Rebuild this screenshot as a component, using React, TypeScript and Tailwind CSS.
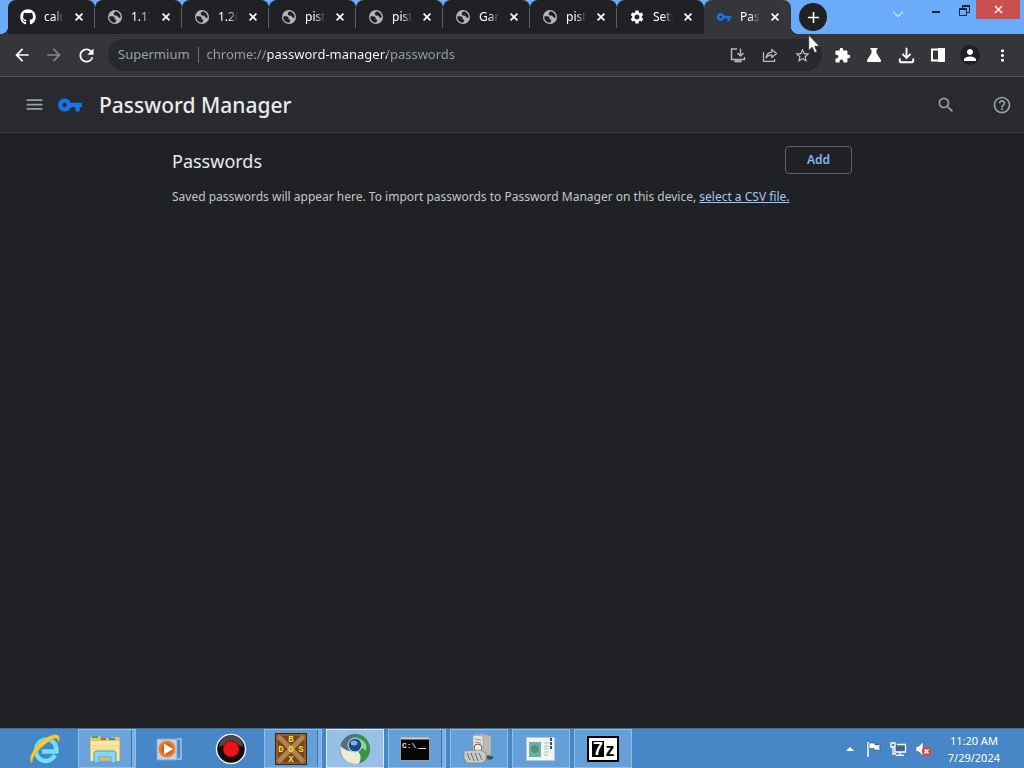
import type { ReactNode } from "react";
import { FaGithub } from "react-icons/fa";
import {
  MdAdd,
  MdArrowBack,
  MdArrowForward,
  MdExtension,
  MdHelpOutline,
  MdMenu,
  MdMoreVert,
  MdOutlineFileDownload,
  MdPerson,
  MdRefresh,
  MdSearch,
  MdSettings,
  MdStarOutline,
  MdVpnKey,
} from "react-icons/md";

function GlobeIcon() {
  return (
    <svg width="16" height="16" viewBox="0 0 16 16">
      <circle cx="8" cy="8" r="7" fill="#b4b5b8" />
      <path d="M2.300 7.500C4.500 7 7 7.300 7.500 8.500S6.800 10.300 8.500 10.600 9 12.500 8 13.700C4.500 13.500 2 11 2.300 7.500Z" fill="#202124" />
      <path d="M7 3.800C8 2.300 9.500 2.300 10.500 2.900C12.500 4 13.700 6 13.700 8.200C12.500 9.300 11.500 9 11 7.800S9.500 7 8.300 6.600 6.300 5.200 7 3.800Z" fill="#202124" />
    </svg>
  );
}

const tabs: { title: string; icon: ReactNode; active?: boolean }[] = [
  { title: "calu", icon: <FaGithub size={16} className="text-white" /> },
  { title: "1.17", icon: <GlobeIcon /> },
  { title: "1.20", icon: <GlobeIcon /> },
  { title: "pist", icon: <GlobeIcon /> },
  { title: "pist", icon: <GlobeIcon /> },
  { title: "Gar", icon: <GlobeIcon /> },
  { title: "pist", icon: <GlobeIcon /> },
  { title: "Sett", icon: <MdSettings size={16} className="text-white" /> },
  { title: "Pass", icon: <MdVpnKey size={16} className="text-[#1a73e8]" />, active: true },
];

function Tab({ title, icon, active, divider }: { title: string; icon: ReactNode; active?: boolean; divider: boolean }) {
  return (
    <div className={`relative flex h-full w-[87px] items-center rounded-t-lg pl-3 pr-2 ${active ? "bg-[#35363a]" : "bg-[#202124]"}`}>
      <button role="tab" aria-selected={!!active} className="flex min-w-0 grow items-center gap-2">
        <span className="flex w-4 shrink-0 justify-center">{icon}</span>
        <span className="w-5 overflow-hidden whitespace-nowrap text-left text-xs text-white mask-r-from-50% mask-r-to-100%">{title}</span>
      </button>
      <button aria-label="Close tab" className="flex w-4 justify-center text-white">
        <svg width="8" height="8" viewBox="0 0 8 8" stroke="currentColor" strokeWidth="1.700"><path d="M.6.6 7.400 7.400M7.400.6.6 7.400" /></svg>
      </button>
      {divider && <span className="absolute right-0 top-2 h-5 w-px bg-[#5f6065]" />}
    </div>
  );
}

function TabStrip() {
  return (
    <div className="flex h-[34px] bg-[#6aabfa]">
      <span className="size-2 shrink-0 self-end bg-[radial-gradient(circle_at_0_0,transparent_8px,#35363a_8px)]" />
      <div role="tablist" className="flex">
        {tabs.map((tab, i) => (
          <Tab key={i} {...tab} divider={i < tabs.length - 2} />
        ))}
      </div>
      <span className="size-2 shrink-0 self-end bg-[radial-gradient(circle_at_100%_0,transparent_8px,#35363a_8px)]" />
      <button aria-label="New tab" className="flex size-7 shrink-0 items-center justify-center self-center rounded-full bg-[#202124] text-white">
        <MdAdd size={19} />
      </button>
      <div className="ml-auto flex items-start">
        <button aria-label="Search tabs" className="flex h-7 w-7 items-center justify-center text-[#b8e6ff]">
          <svg width="12" height="8" viewBox="0 0 12 8" fill="none" stroke="currentColor" strokeWidth="1.300"><path d="M1 1.500 6 6.500 11 1.500" /></svg>
        </button>
        <button aria-label="Minimize" className="ml-2 flex h-6 w-8 items-center justify-center">
          <span className="h-0.5 w-2 bg-[#17243a]" />
        </button>
        <button aria-label="Restore" className="flex h-5 w-6 items-center justify-center">
          <svg width="11" height="11" viewBox="0 0 11 11" fill="none" stroke="#17243a"><path d="M3.500 3V.5H10.500V7.500H8" /><path d="M.5 3.500H7.500V10.500H.5Z" /><path d="M1 4.500H7M4 1.500H10" /></svg>
        </button>
        <button aria-label="Close window" className="mr-1 flex h-[19px] w-11 items-center justify-center bg-[#c9504f] text-white">
          <svg width="9" height="9" viewBox="0 0 9 9" stroke="currentColor" strokeWidth="1.500"><path d="M1 1 8 8M8 1 1 8" /></svg>
        </button>
      </div>
    </div>
  );
}

function IconButton({ label, children }: { label: string; children: ReactNode }) {
  return (
    <button aria-label={label} className="flex size-8 shrink-0 items-center justify-center">
      {children}
    </button>
  );
}

function Toolbar() {
  return (
    <div className="flex h-[43px] items-center border-b border-[#55565a] bg-[#35363a] pl-1.5 pr-1.5 text-white">
      <IconButton label="Back"><MdArrowBack size={20} /></IconButton>
      <IconButton label="Forward"><MdArrowForward size={20} className="text-[#85868a]" /></IconButton>
      <IconButton label="Reload"><MdRefresh size={21} /></IconButton>
      <div className="ml-1.5 mr-1 flex h-8 min-w-0 grow items-center rounded-full bg-[#28292c] pl-2.5 pr-1 text-[#9aa0a6]">
        <label htmlFor="address" className="text-[13px]">Supermium</label>
        <span className="mx-2 h-4 w-px bg-[#6b6d71]" />
        <input
          id="address"
          defaultValue="chrome://password-manager/passwords"
          className="min-w-0 grow bg-[linear-gradient(90deg,#9aa0a6_60px,#ffffff_60px,#ffffff_180px,#9aa0a6_180px)] bg-clip-text text-[13px] text-transparent outline-none"
        />
        <IconButton label="Install">
          <svg width="16" height="16" viewBox="0 0 16 16" fill="none" stroke="#b9bbbe" strokeWidth="1.400"><path d="M7 2H1.500V12.500H14.500V10" /><path d="M10.500 1.500V8.500M7.500 6 10.500 9 13.500 6" /><path d="M4.500 14.300H11.500" strokeWidth="2" /></svg>
        </IconButton>
        <IconButton label="Share">
          <svg width="16" height="16" viewBox="0 0 16 16" fill="none" stroke="#b9bbbe" strokeWidth="1.300"><path d="M1.500 5V14.300H12.500V12" /><path d="M4 11C4.500 7.500 6.500 5.500 9.800 5.200V2.500L14.500 6.500 9.800 10.500V7.900C7.500 7.900 5.500 8.800 4 11Z" strokeLinejoin="round" /></svg>
        </IconButton>
        <IconButton label="Bookmark"><MdStarOutline size={17} className="text-[#c6c8cb]" /></IconButton>
      </div>
      <IconButton label="Extensions"><MdExtension size={17} /></IconButton>
      <IconButton label="Experiments">
        <svg width="16" height="16" viewBox="0 0 16 16" fill="currentColor"><path d="M4.500 1H11.500V2.600H10.500V6L15 13.300Q15.500 15 14 15H2Q.5 15 1 13.300L5.500 6V2.600H4.500Z" /></svg>
      </IconButton>
      <IconButton label="Downloads"><MdOutlineFileDownload size={23} /></IconButton>
      <IconButton label="Side panel">
        <svg width="14" height="14" viewBox="0 0 14 14" fill="none" stroke="currentColor" strokeWidth="2"><path d="M1 1.500H13V12.500H1Z" /><path d="M8 1H13V13H8Z" fill="currentColor" /></svg>
      </IconButton>
      <IconButton label="Profile">
        <span className="flex size-5 items-center justify-center rounded-full bg-[#202124]"><MdPerson size={18} /></span>
      </IconButton>
      <IconButton label="Menu"><MdMoreVert size={19} /></IconButton>
    </div>
  );
}

function PageHeader() {
  return (
    <header className="flex h-14 items-center border-b border-[#414246] bg-[#292a2d] pl-6 pr-3 text-[#9aa0a6]">
      <button aria-label="Main menu"><MdMenu size={21} /></button>
      <MdVpnKey size={26} className="ml-3 text-[#1a73e8]" />
      <h1 className="ml-4 grow pt-0.5 text-[21px] font-medium text-[#e8eaed]">Password Manager</h1>
      <button aria-label="Search passwords"><MdSearch size={20} /></button>
      <a href="#help" aria-label="Help" className="ml-9"><MdHelpOutline size={20} /></a>
    </header>
  );
}

function Passwords() {
  return (
    <main className="grow bg-[#202124] text-[#e8eaed]">
      <div className="mx-auto max-w-[680px] pt-3">
        <div className="flex items-center justify-between">
          <h2 className="pt-0.5 text-lg leading-7">Passwords</h2>
          <button className="h-7 w-[67px] rounded border border-[#5f6368] text-xs font-semibold text-[#8ab4f8]">Add</button>
        </div>
        <p className="mt-3 text-xs leading-5 text-[#c3c5c9]">
          Saved passwords will appear here. To import passwords to Password Manager on this device,{" "}
          <a href="#import" className="text-[#a3c5fa] underline">select a CSV file.</a>
        </p>
      </div>
    </main>
  );
}

function ExplorerIcon() {
  return (
    <svg width="32" height="32" viewBox="0 0 32 32">
      <path d="M1 5 3 3H11L12 5H22L23 4H30L31 6V28H1Z" fill="#e2c465" />
      <path d="M2 8H30V28H2Z" fill="#f7e7a0" />
      <path d="M3 4H9" stroke="#45a654" strokeWidth="2" />
      <path d="M12 6H17" stroke="#cf5547" strokeWidth="2" />
      <path d="M20 6H26" stroke="#438ac2" strokeWidth="2" />
      <path d="M4 13H28M4 16H28" stroke="#e9d37d" />
      <path d="M5 30V20Q5 18 8 18H24Q27 18 27 20V30H22V24H10V30Z" fill="#8ed2ee" stroke="#4a9fc4" />
      <path d="M11 25H21V28H11Z" fill="#e0b650" />
    </svg>
  );
}

function IeIcon() {
  return (
    <svg width="34" height="32" viewBox="0 0 34 32">
      <path d="M27 22C24.500 26 21.500 28 18 28C12 28 8 23.500 8 17.500S12.500 6.500 18.500 6.500S29 11 28.500 18.500H14" fill="none" stroke="#248fc6" strokeWidth="6.500" />
      <path d="M27 22C24.500 26 21.500 28 18 28C12 28 8 23.500 8 17.500S12.500 6.500 18.500 6.500S29 11 28.500 18.500H14" fill="none" stroke="#79dcf5" strokeWidth="4.500" />
      <path d="M4 30C-2 25 10 8 22 3C29 0 34 2 30 10C31 4 27 4 20 9C11 15 4 24 4 30Z" fill="#f6cc3c" stroke="#d99c20" strokeWidth=".6" />
    </svg>
  );
}

function MediaPlayerIcon() {
  return (
    <svg width="30" height="26" viewBox="0 0 30 26">
      <path d="M23 3H27V23H23" fill="none" stroke="#9cc9ec" strokeWidth="1.500" />
      <rect x="3" y="3" width="20" height="21" fill="#b6d6eb" stroke="#6eaadc" />
      <circle cx="13" cy="13" r="9" fill="#e67f38" stroke="#f6c096" />
      <circle cx="13" cy="13" r="6" fill="#d55f20" />
      <path d="M10 7.500 19 13 10 18.500Z" fill="#fff" />
    </svg>
  );
}

function RecordIcon() {
  return (
    <svg width="32" height="32" viewBox="0 0 32 32">
      <circle cx="16" cy="16" r="14.500" fill="#15090b" stroke="#eee" strokeWidth="1.500" />
      <path d="M4 14A12 12 0 0 1 28 14Q16 7 4 14Z" fill="#504449" />
      <circle cx="16" cy="16" r="8" fill="#ec1419" stroke="#7e080c" />
    </svg>
  );
}

function DosBoxIcon() {
  return (
    <svg width="32" height="32" viewBox="0 0 32 32" fontFamily="Liberation Mono, monospace" fontWeight="bold" fontSize="9" fill="#f8df43" textAnchor="middle">
      <rect x=".5" y=".5" width="31" height="31" fill="#77441f" stroke="#3d2616" />
      <path d="M3 3 29 29M29 3 3 29" stroke="#ad8350" strokeWidth="5" />
      <rect x="2" y="2" width="28" height="28" fill="none" stroke="#ad6f34" />
      <text x="16" y="9">B</text>
      <text x="6" y="19">D</text>
      <text x="16" y="19">O</text>
      <text x="26" y="19">S</text>
      <text x="16" y="29">X</text>
    </svg>
  );
}

function SupermiumIcon() {
  return (
    <svg width="32" height="32" viewBox="0 0 32 32">
      <circle cx="16" cy="16" r="15" fill="#547179" />
      <path d="M16 1A15 15 0 0 1 22 29.700Q12 27 18 19Q24 12 16 1Z" fill="#38934a" />
      <path d="M1.500 13Q8 20 18 18Q24 22 20 30.500C9 33 0 24 1.500 13Z" fill="#eeebd3" />
      <path d="M21 6Q29 9 27 18L22 14Z" fill="#8bd68d" />
      <circle cx="16" cy="12" r="7.500" fill="#b7cfd9" />
      <circle cx="16" cy="12" r="6.300" fill="#174a89" />
      <ellipse cx="15" cy="10" rx="3.500" ry="2.500" fill="#78b2df" />
    </svg>
  );
}

function CmdIcon() {
  return (
    <svg width="30" height="24" viewBox="0 0 30 24">
      <rect x=".5" y=".5" width="29" height="23" fill="#050505" stroke="#949da5" />
      <path d="M1 1.500H29" stroke="#c8d1d8" strokeWidth="2" />
      <text x="2" y="11" fontFamily="Liberation Mono, monospace" fontSize="8" fontWeight="bold" fill="#e3e3e3">C:\_</text>
      <path d="M19 11.500H26" stroke="#e3e3e3" />
    </svg>
  );
}

function ComputerIcon() {
  return (
    <svg width="32" height="32" viewBox="0 0 32 32">
      <path d="M10 2 19 1 28 3V22L20 25 10 21Z" fill="#b8b9b0" />
      <path d="M10 2 20 3V25L10 21Z" fill="#e7e6db" stroke="#96978f" strokeWidth=".6" />
      <path d="M12 6 18 7M12 9 18 10" stroke="#8d8e87" />
      <circle cx="15" cy="15" r="4" fill="#edece5" stroke="#555b5d" />
      <path d="M1 18 17 17 23 20V27L19 30H4L1 25Z" fill="#c9cbc4" stroke="#757b7b" strokeWidth=".6" />
      <path d="M4 20 7 27M8 20 11 28M12 20 15 28M16 20 19 27" stroke="#5d6b6d" />
      <path d="M24 22 31 24 28 27 24 26Z" fill="#40535d" />
    </svg>
  );
}

function DocumentIcon() {
  return (
    <svg width="30" height="26" viewBox="0 0 30 26">
      <rect x=".5" y="1.500" width="28" height="23" fill="#eef5f3" stroke="#b3c9cd" />
      <rect x="3" y="6" width="12" height="15" fill="#70b1a5" />
      <circle cx="9" cy="13" r="4" fill="#4d9488" />
      <path d="M18 7H23M18 10H23M18 13H22M18 16H23M18 19H22" stroke="#b5bfba" />
      <path d="M25 2V14" stroke="#31535f" strokeWidth="2" strokeDasharray="3 1" />
    </svg>
  );
}

function SevenZipIcon() {
  return (
    <svg width="32" height="26" viewBox="0 0 32 26" fontFamily="Liberation Sans, sans-serif" fontWeight="bold" textAnchor="middle">
      <rect x="1" y="1" width="30" height="24" fill="#fff" stroke="#000" strokeWidth="2" />
      <rect x="5" y="5" width="12" height="16" fill="#000" />
      <text x="11" y="19" fontSize="18" fill="#fff">7</text>
      <text x="23" y="20" fontSize="18" fill="#000">z</text>
    </svg>
  );
}

const apps = [
  { name: "Internet Explorer", icon: <IeIcon />, style: "border-transparent" },
  { name: "File Explorer", icon: <ExplorerIcon />, style: "border-[#8fbde8] bg-[#6aa2d9]" },
  { name: "Media Player", icon: <MediaPlayerIcon />, style: "border-transparent" },
  { name: "Recorder", icon: <RecordIcon />, style: "border-transparent" },
  { name: "DOSBox", icon: <DosBoxIcon />, style: "border-[#8fbde8] bg-[#659fd8]" },
  { name: "Supermium", icon: <SupermiumIcon />, style: "border-[#d8e9f8] bg-[#98bfe5]" },
  { name: "Command Prompt", icon: <CmdIcon />, style: "border-[#8fbde8] bg-[#659fd8]" },
  { name: "System", icon: <ComputerIcon />, style: "border-[#8fbde8] bg-[#659fd8]" },
  { name: "Viewer", icon: <DocumentIcon />, style: "border-[#8fbde8] bg-[#659fd8]" },
  { name: "7-Zip", icon: <SevenZipIcon />, style: "border-[#8fbde8] bg-[#659fd8]" },
];

// Apps with more than one window get the stacked edge on the right.
const stacked = ["File Explorer", "DOSBox", "Command Prompt"];

function Taskbar() {
  return (
    <footer className="flex h-10 items-stretch border-t border-[#3c6f9f] bg-[#4787c7] pl-4 pr-6">
      <div className="flex gap-1">
        {apps.map((app) => (
          <button key={app.name} aria-label={app.name} className={`flex w-[58px] items-center justify-center border ${app.style}`}>
            <span className="flex grow justify-center">{app.icon}</span>
            {stacked.includes(app.name) && <span className="h-full w-1 border-l border-[#3d73a8] bg-[#7db0e0]" />}
          </button>
        ))}
      </div>
      <div className="ml-auto flex items-center text-white">
        <button aria-label="Show hidden icons" className="mr-3">
          <svg width="8" height="5" viewBox="0 0 8 5" fill="currentColor"><path d="M0 5 4 1 8 5Z" /></svg>
        </button>
        <button aria-label="Action Center" className="mr-2">
          <svg width="16" height="16" viewBox="0 0 16 16"><path d="M2 1V16" stroke="#fff" strokeWidth="1.500" /><path d="M3 2H9V4H15L13 6.500 15 9H8V7.500H3Z" fill="#fff" stroke="#27466d" strokeWidth=".6" /></svg>
        </button>
        <button aria-label="Network" className="mr-2">
          <svg width="17" height="16" viewBox="0 0 17 16" fill="none" stroke="#fff" strokeWidth="1.300"><path d="M7 3.500H15.500V11H5V7" fill="#3d6790" /><path d="M10 11V14M6 14.300H14" /><path d="M1 2H5V6H1ZM3 6V13H6" /></svg>
        </button>
        <button aria-label="Volume muted" className="mr-4">
          <svg width="17" height="16" viewBox="0 0 17 16"><path d="M1 5.500H3.500L8 1V15L3.500 10.500H1Z" fill="#fff" stroke="#38608a" strokeWidth=".5" /><circle cx="11.500" cy="10.500" r="4.800" fill="#d24b41" /><path d="M9.500 8.500 13.500 12.500M13.500 8.500 9.500 12.500" stroke="#fff" strokeWidth="1.500" /></svg>
        </button>
        <div className="flex flex-col items-center whitespace-nowrap text-[11px] leading-[17px]">
          <time>11:20 AM</time>
          <time>7/29/2024</time>
        </div>
      </div>
    </footer>
  );
}

export default function App() {
  return (
    <div className="relative flex min-h-screen flex-col bg-[#202124] font-['Noto_Sans','Open_Sans',sans-serif]">
      <TabStrip />
      <Toolbar />
      <PageHeader />
      <Passwords />
      <Taskbar />
      <svg className="pointer-events-none absolute left-[808px] top-[34px]" width="12" height="20" viewBox="0 0 12 20">
        <path d="M.7 1V16.500L4.200 13.200 6.700 18.800 9.200 17.700 6.700 12.300H11.500Z" fill="#fff" stroke="#222" strokeWidth=".7" />
      </svg>
    </div>
  );
}
